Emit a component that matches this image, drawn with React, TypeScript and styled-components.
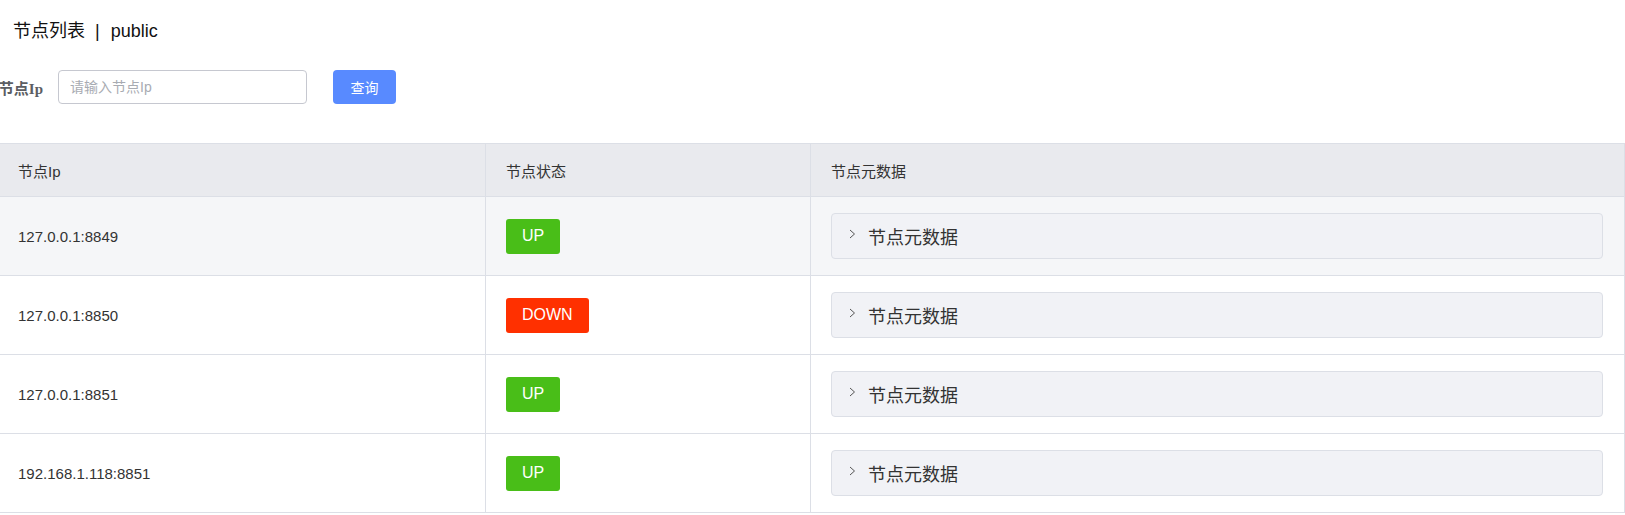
import React from 'react'
import styled, { createGlobalStyle } from 'styled-components'

const GlobalStyle = createGlobalStyle`
  html, body {
    margin: 0;
    padding: 0;
    background: #fff;
    overflow: hidden;
  }
  body {
    font-family: "Liberation Sans", "Noto Sans CJK SC", sans-serif;
    color: #333;
  }
`

const Page = styled.div`
  width: 1625px;
  padding-top: 19px;
`

const Title = styled.div`
  padding-left: 13px;
  font-size: 18px;
  line-height: 25px;
  color: #111;
`

const Divider = styled.span`
  margin: 0 11px 0 10px;
`

const SearchForm = styled.form`
  display: flex;
  align-items: center;
  margin-top: 26px;
  height: 34px;
`

const Label = styled.label`
  display: flex;
  justify-content: flex-end;
  width: 43px;
  font-family: "Liberation Serif", "Noto Sans CJK SC", serif;
  font-weight: bold;
  font-size: 15px;
  color: #5c5e63;
  white-space: nowrap;
`

const Input = styled.input`
  box-sizing: border-box;
  margin-left: 15px;
  width: 249px;
  height: 34px;
  padding: 0 11px;
  border: 1px solid #c6c8d0;
  border-radius: 4px;
  font-family: "Liberation Sans", "Noto Sans CJK SC", sans-serif;
  font-size: 14px;
  color: #333;
  outline: none;
  &::placeholder {
    color: #a8abb2;
  }
`

const SearchButton = styled.button`
  margin-left: 26px;
  width: 63px;
  height: 34px;
  border: none;
  border-radius: 4px;
  background: #588aff;
  color: #fff;
  font-family: "Noto Sans CJK SC", sans-serif;
  font-size: 14px;
  cursor: pointer;
`

const Table = styled.div`
  margin-top: 39px;
  border-top: 1px solid #dcdfe6;
  border-right: 1px solid #dcdfe6;
`

const Row = styled.div<{ $header?: boolean; $hover?: boolean }>`
  display: grid;
  grid-template-columns: 485px 325px 1fr;
  height: ${p => (p.$header ? 52 : 78)}px;
  border-bottom: 1px solid #dcdfe6;
  background: ${p => (p.$header ? '#e9eaee' : p.$hover ? '#f5f6f8' : '#fff')};
  font-size: 15px;
  color: #333;
`

const Cell = styled.div<{ $first?: boolean }>`
  display: flex;
  align-items: center;
  padding-left: ${p => (p.$first ? 18 : 20)}px;
  border-left: ${p => (p.$first ? 'none' : '1px solid #dcdfe6')};
  min-width: 0;
`

const MetaCell = styled(Cell)`
  padding-right: 21px;
`

const Badge = styled.span<{ $up: boolean }>`
  display: inline-flex;
  align-items: center;
  justify-content: center;
  height: 35px;
  padding: 0 16px;
  border-radius: 3px;
  background: ${p => (p.$up ? '#49be18' : '#ff3000')};
  color: #fff;
  font-size: 16px;
`

const Collapse = styled.div`
  box-sizing: border-box;
  display: flex;
  align-items: center;
  width: 100%;
  height: 46px;
  padding-left: 17px;
  border: 1px solid #dcdfe6;
  border-radius: 4px;
  background: #f1f2f6;
  font-family: "Noto Sans CJK SC", sans-serif;
  font-size: 18px;
  color: #333;
`

const Chevron = styled.svg`
  width: 7px;
  height: 10px;
  margin-right: 12px;
  margin-top: -4px;
`

type Node = { ip: string; up: boolean }

const nodes: Node[] = [
  { ip: '127.0.0.1:8849', up: true },
  { ip: '127.0.0.1:8850', up: false },
  { ip: '127.0.0.1:8851', up: true },
  { ip: '192.168.1.118:8851', up: true }
]

export default function App() {
  return <Page>
    <GlobalStyle />
    <Title>节点列表<Divider>|</Divider>public</Title>
    <SearchForm onSubmit={e => e.preventDefault()}>
      <Label>节点Ip</Label>
      <Input placeholder="请输入节点Ip" />
      <SearchButton type="submit">查询</SearchButton>
    </SearchForm>
    <Table>
      <Row $header>
        <Cell $first>节点Ip</Cell>
        <Cell>节点状态</Cell>
        <Cell>节点元数据</Cell>
      </Row>
      {
        nodes.map((node, i) => {
          return <Row key={node.ip} $hover={i === 0}>
            <Cell $first>{node.ip}</Cell>
            <Cell><Badge $up={node.up}>{node.up ? 'UP' : 'DOWN'}</Badge></Cell>
            <MetaCell>
              <Collapse>
                <Chevron viewBox="0 0 7 10">
                  <path d="M1 1 L5.5 5 L1 9" fill="none" stroke="#555" strokeWidth="1" />
                </Chevron>
                节点元数据
              </Collapse>
            </MetaCell>
          </Row>
        })
      }
    </Table>
  </Page>
}
